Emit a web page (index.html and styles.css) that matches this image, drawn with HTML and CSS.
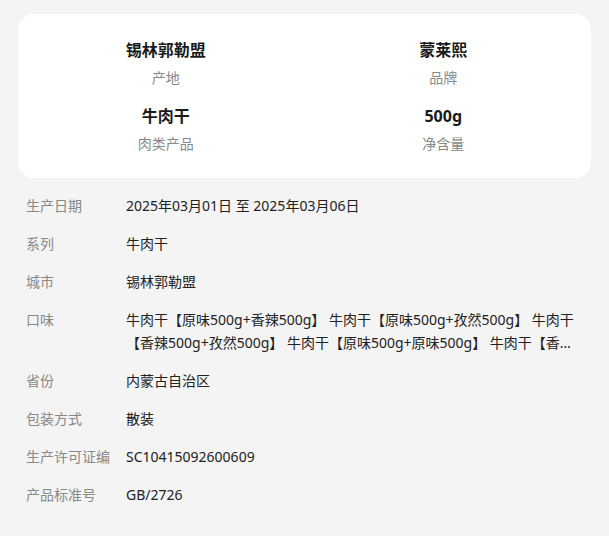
FILE: index.html
```html
<!DOCTYPE html>
<html>
<head>
    <title>商品参数</title>
    <meta name="viewport" content="width=device-width, initial-scale=1">
    <link rel="stylesheet" href="styles.css">
</head>
<body>
    <div class="page">
        <div class="summary-card">
            <div class="summary-item">
                <div class="summary-value">锡林郭勒盟</div>
                <div class="summary-label">产地</div>
            </div>
            <div class="summary-item">
                <div class="summary-value">蒙莱熙</div>
                <div class="summary-label">品牌</div>
            </div>
            <div class="summary-item">
                <div class="summary-value">牛肉干</div>
                <div class="summary-label">肉类产品</div>
            </div>
            <div class="summary-item">
                <div class="summary-value">500g</div>
                <div class="summary-label">净含量</div>
            </div>
        </div>

        <div class="param-list">
            <div class="param-row">
                <div class="param-label">生产日期</div>
                <div class="param-value">2025年03月01日 至 2025年03月06日</div>
            </div>
            <div class="param-row">
                <div class="param-label">系列</div>
                <div class="param-value">牛肉干</div>
            </div>
            <div class="param-row">
                <div class="param-label">城市</div>
                <div class="param-value">锡林郭勒盟</div>
            </div>
            <div class="param-row">
                <div class="param-label">口味</div>
                <div class="param-value clamp">牛肉干【原味500g+香辣500g】 牛肉干【原味500g+孜然500g】 牛肉干【香辣500g+孜然500g】 牛肉干【原味500g+原味500g】 牛肉干【香辣500g+香辣500g】 牛肉干【孜然500g+孜然500g】</div>
            </div>
            <div class="param-row">
                <div class="param-label">省份</div>
                <div class="param-value">内蒙古自治区</div>
            </div>
            <div class="param-row">
                <div class="param-label">包装方式</div>
                <div class="param-value">散装</div>
            </div>
            <div class="param-row">
                <div class="param-label">生产许可证编</div>
                <div class="param-value">SC10415092600609</div>
            </div>
            <div class="param-row">
                <div class="param-label">产品标准号</div>
                <div class="param-value">GB/2726</div>
            </div>
        </div>
    </div>
</body>
</html>
```

FILE: styles.css
```css
body { margin: 0; background-color: #f4f4f4; font-family: "Noto Sans", "Noto Sans CJK SC", sans-serif; color: #222; }
.page { padding: 14px 26px 20px 26px; }
.summary-card { margin: 0 -8px; background-color: #fff; border-radius: 16px; padding: 23px 9px 20px 9px; display: grid; grid-template-columns: 1fr 1fr; row-gap: 11px; }
.summary-item { text-align: center; }
.summary-value { font-size: 16px; font-weight: bold; line-height: 26px; color: #1a1a1a; }
.summary-label { margin-top: 1px; font-size: 14px; line-height: 28px; color: #888; }
.param-list { margin-top: 16px; }
.param-row { display: flex; padding-bottom: 15px; font-size: 14px; line-height: 23px; }
.param-label { width: 100px; flex-shrink: 0; color: #888; white-space: nowrap; overflow: hidden; }
.param-value { flex: 1; color: #222; }
.clamp { display: -webkit-box; -webkit-line-clamp: 2; -webkit-box-orient: vertical; overflow: hidden; }
```
